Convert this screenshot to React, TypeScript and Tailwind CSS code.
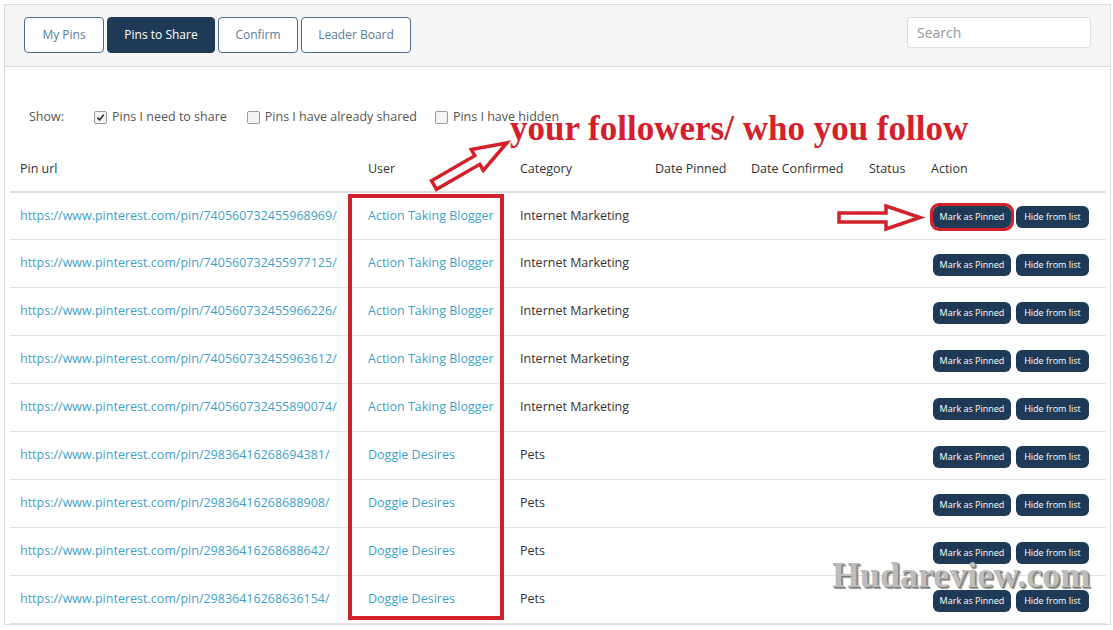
import React from 'react'

type Row = { id: string; user: string; category: string }

const ROWS: Row[] = [
  { id: '740560732455968969', user: 'Action Taking Blogger', category: 'Internet Marketing' },
  { id: '740560732455977125', user: 'Action Taking Blogger', category: 'Internet Marketing' },
  { id: '740560732455966226', user: 'Action Taking Blogger', category: 'Internet Marketing' },
  { id: '740560732455963612', user: 'Action Taking Blogger', category: 'Internet Marketing' },
  { id: '740560732455890074', user: 'Action Taking Blogger', category: 'Internet Marketing' },
  { id: '29836416268694381', user: 'Doggie Desires', category: 'Pets' },
  { id: '29836416268688908', user: 'Doggie Desires', category: 'Pets' },
  { id: '29836416268688642', user: 'Doggie Desires', category: 'Pets' },
  { id: '29836416268636154', user: 'Doggie Desires', category: 'Pets' },
]

const TABS = [
  { label: 'My Pins', w: 'w-[80px]' },
  { label: 'Pins to Share', w: 'w-[108px]' },
  { label: 'Confirm', w: 'w-[80px]' },
  { label: 'Leader Board', w: 'w-[110px]' },
]

function Check({ checked }: { checked?: boolean }) {
  return (
    <span className="flex h-[13px] w-[13px] items-center justify-center rounded-[2px] border border-[#9a9a9a] bg-[#f4f4f4]">
      {checked && (
        <svg width="9" height="9" viewBox="0 0 10 10">
          <path d="M1.5 5.2 L4 7.6 L8.6 2" fill="none" stroke="#333" strokeWidth="1.8" />
        </svg>
      )}
    </span>
  )
}

export default function App() {
  const active = 'Pins to Share'

  return (
    <div className="relative h-[630px] w-[1113px] overflow-hidden bg-white pl-[4px] pt-[4px] font-['Open_Sans',sans-serif] text-[12.5px] text-[#333]">
      <div className="w-[1107px] border border-[#dcdcdc]">
        {/* tabs + search */}
        <div className="flex h-[62px] items-start justify-between border-b border-[#dcdcdc] bg-[#f5f5f5] pl-[19px] pr-[19px] pt-[12px]">
          <div className="flex gap-[3px]">
            {TABS.map((t) => (
              <button
                key={t.label}
                className={`h-[36px] ${t.w} rounded-[4px] border text-[12px] ${
                  t.label === active
                    ? 'border-[#1f3a56] bg-[#1f3a56] text-white'
                    : 'border-[#4c6d8c] bg-white text-[#5b7a99]'
                }`}
              >
                {t.label}
              </button>
            ))}
          </div>
          <div className="flex h-[31px] w-[184px] items-center rounded-[3px] border border-[#dcdcdc] bg-white px-[9px] text-[14px] text-[#999]">
            Search
          </div>
        </div>

        {/* filters */}
        <div className="flex items-center gap-[14px] pl-[24px] pt-[41px] text-[#555]">
          <span className="mr-[16px]">Show:</span>
          <label className="flex items-center gap-[5px]">
            <Check checked />
            Pins I need to share
          </label>
          <label className="ml-[6px] flex items-center gap-[5px]">
            <Check />
            Pins I have already shared
          </label>
          <label className="ml-[4px] flex items-center gap-[5px]">
            <Check />
            Pins I have hidden
          </label>
        </div>

        {/* table */}
        <table className="ml-[5px] mt-[18px] w-[1096px] table-fixed border-collapse">
          <colgroup>
            <col className="w-[348px]" />
            <col className="w-[152px]" />
            <col className="w-[135px]" />
            <col className="w-[96px]" />
            <col className="w-[118px]" />
            <col className="w-[62px]" />
            <col />
          </colgroup>
          <thead>
            <tr className="h-[47px] border-b-2 border-[#dedede] text-left text-[#333]">
              <th className="px-[10px] pt-[4px] font-normal">Pin url</th>
              <th className="px-[10px] pt-[4px] font-normal">User</th>
              <th className="px-[10px] pt-[4px] font-normal">Category</th>
              <th className="px-[10px] pt-[4px] font-normal">Date Pinned</th>
              <th className="px-[10px] pt-[4px] font-normal">Date Confirmed</th>
              <th className="px-[10px] pt-[4px] font-normal">Status</th>
              <th className="px-[10px] pt-[4px] font-normal">Action</th>
            </tr>
          </thead>
          <tbody>
            {ROWS.map((r) => (
              <tr key={r.id} className="h-[48px] border-b border-[#e3e3e3]">
                <td className="whitespace-nowrap px-[10px] text-[#3f9fc8]">
                  https://www.pinterest.com/pin/{r.id}/
                </td>
                <td className="whitespace-nowrap px-[10px] text-[#3f9fc8]">{r.user}</td>
                <td className="whitespace-nowrap px-[10px]">{r.category}</td>
                <td />
                <td />
                <td />
                <td className="px-[10px]">
                  <div className="flex gap-[5px] pl-[2px] pt-[2px]">
                    <button className="h-[22px] w-[78px] rounded-[6px] bg-[#1f3a56] text-[9px] text-white">
                      Mark as Pinned
                    </button>
                    <button className="h-[22px] w-[73px] rounded-[6px] bg-[#1f3a56] text-[9px] text-white">
                      Hide from list
                    </button>
                  </div>
                </td>
              </tr>
            ))}
          </tbody>
        </table>
      </div>

      {/* annotations */}
      <div className="absolute left-[510px] top-[111px] whitespace-nowrap font-['Liberation_Serif',serif] text-[35px] font-bold leading-none text-[#d4202b]">
        your followers/ who you follow
      </div>
      <svg className="absolute left-[420px] top-[133px]" width="100" height="65" viewBox="0 0 100 65">
        <g transform="translate(14 52) rotate(-30)">
          <polygon
            points="0,-5 50,-5 50,-12 84,0 50,12 50,5 0,5"
            fill="#fff"
            stroke="#d4202b"
            strokeWidth="3.5"
            strokeLinejoin="miter"
          />
        </g>
      </svg>
      <div className="absolute left-[348px] top-[194px] h-[426px] w-[156px] border-[4px] border-[#d4202b]" />
      <svg className="absolute left-[834px] top-[202px]" width="92" height="32" viewBox="0 0 92 32">
        <polygon
          points="5,11 52,11 52,4 86,15.5 52,27 52,20 5,20"
          fill="#fff"
          stroke="#d4202b"
          strokeWidth="3.5"
        />
      </svg>
      <div className="absolute left-[930px] top-[203px] h-[28px] w-[84px] rounded-[9px] border-[3px] border-[#d4202b]" />

      {/* watermark */}
      <div className="absolute left-[832px] top-[557px] whitespace-nowrap font-['Liberation_Serif',serif] text-[36px] font-bold leading-none text-[#bdbdbd] [text-shadow:1px_1px_0_#7a7a7a,2px_2px_1px_#999]">
        Hudareview.com
      </div>
    </div>
  )
}
